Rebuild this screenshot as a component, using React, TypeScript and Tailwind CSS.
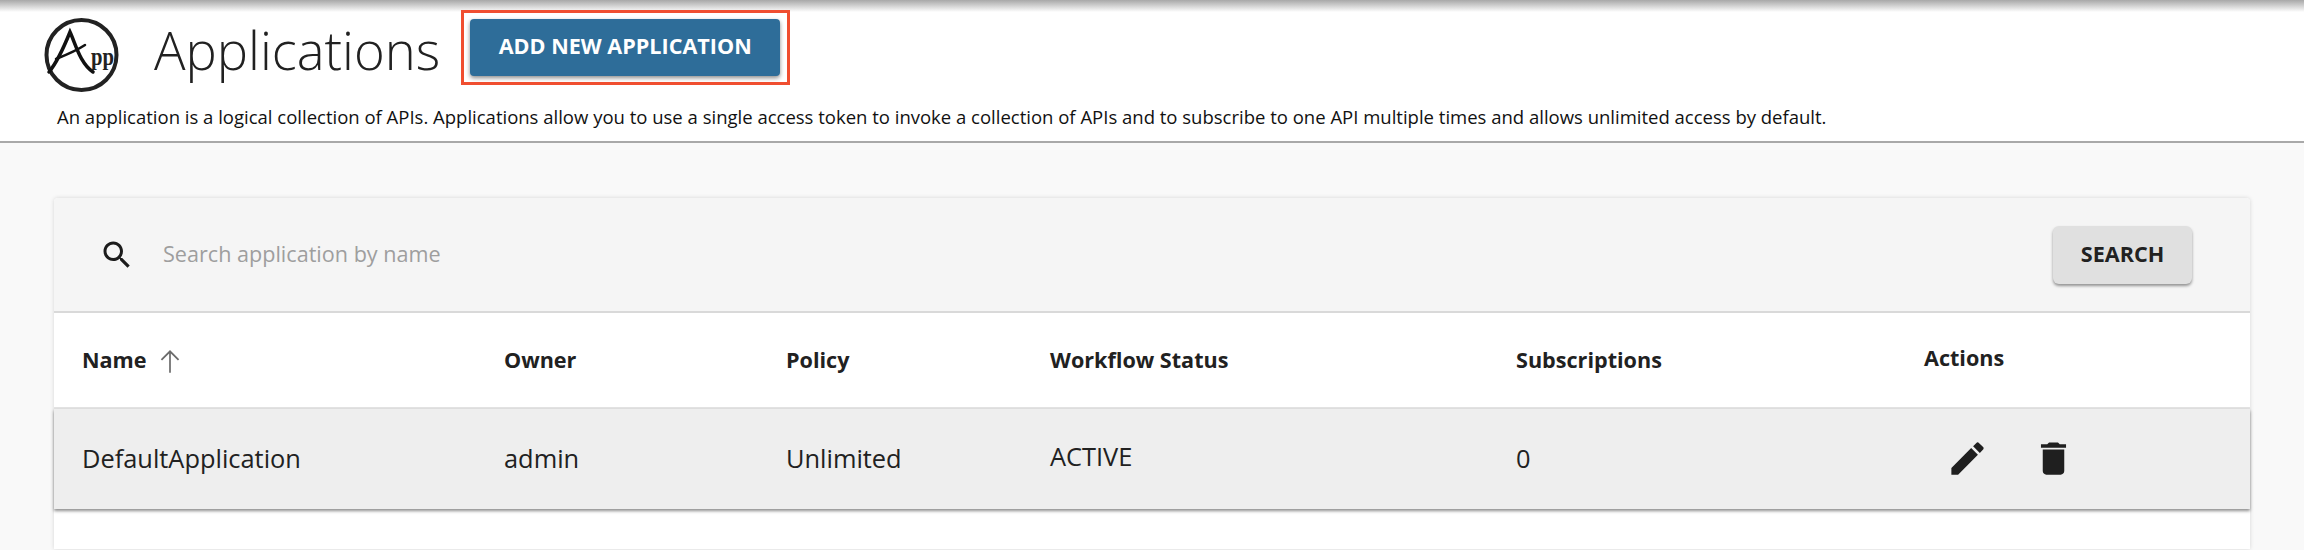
const font = { fontFamily: '"Open Sans", sans-serif' };

const Logo = () => (
  <svg width="76" height="76" viewBox="0 0 76 76" className="shrink-0 mt-[5px] overflow-visible">
    <circle cx="37.5" cy="38" r="35" fill="none" stroke="#222" strokeWidth="4" />
    <path d="M5 55 C14 44 20 30 26 15 C32 28 36 46 49 55" fill="none" stroke="#111" strokeWidth="3.5" strokeLinecap="round" />
    <path d="M12 42 C22 38 32 34 41 28" fill="none" stroke="#111" strokeWidth="2.5" strokeLinecap="round" />
    <text x="47" y="48" fontSize="25" fontWeight="700" fill="#222" textLength="23" lengthAdjust="spacingAndGlyphs" fontFamily="Liberation Serif, serif">pp</text>
  </svg>
);

const columns = "grid grid-cols-[422px_282px_264px_466px_408px_1fr] pl-[28px]";

export default function App() {
  return (
    <div className="min-h-[550px] bg-[#f9f9f9] text-[#212121] overflow-hidden" style={font}>
      <div className="h-[12px] bg-gradient-to-b from-[#a8a8a8] to-white" />
      <header className="h-[131px] bg-white border-b-2 border-[#a9a9a9]">
        <div className="flex items-start pl-[44px]">
          <Logo />
          <h1 className="ml-[34px] mt-[1px] text-[52.5px] leading-[74px] font-light">Applications</h1>
          <div className="ml-[21px] -mt-[2px] border-[3px] border-[#f04e30] p-[6px] w-[329px] h-[75px]">
            <button className="w-[310px] h-[57px] pb-[2px] rounded bg-[#2e6d99] text-white text-[21.6px] font-bold shadow-[0_2px_4px_rgba(0,0,0,0.45)]">
              ADD NEW APPLICATION
            </button>
          </div>
        </div>
        <p className="ml-[57px] mt-[11px] text-[18.5px] leading-[25px] text-[#111]">
          An application is a logical collection of APIs. Applications allow you to use a single access token to invoke a collection of APIs and to subscribe to one API multiple times and allows unlimited access by default.
        </p>
      </header>
      <main className="mx-[54px] mt-[55px] h-[351px] bg-white shadow-[0_0_4px_rgba(0,0,0,0.15)] rounded-t">
        <div className="h-[115px] flex items-center bg-[#f5f5f5] border-b-2 border-[#d9d9d9] pl-[45px] pr-[58px] rounded-t">
          <svg width="36" height="36" viewBox="0 0 24 24" fill="#1c1c1c" className="shrink-0">
            <path d="M15.5 14h-.79l-.28-.27C15.41 12.59 16 11.11 16 9.5 16 5.91 13.09 3 9.5 3S3 5.91 3 9.5 5.91 16 9.5 16c1.61 0 3.09-.59 4.23-1.57l.27.28v.79l5 4.99L20.49 19l-4.99-5zm-6 0C7.01 14 5 11.99 5 9.5S7.01 5 9.5 5 14 7.01 14 9.5 11.99 14 9.5 14z" />
          </svg>
          <span className="ml-[28px] flex-1 text-[21.6px] text-[#9e9e9e]">Search application by name</span>
          <button className="w-[139px] h-[58px] rounded-md bg-[#e0e0e0] text-[21.6px] font-bold text-[#212121] shadow-[0_2px_3px_rgba(0,0,0,0.4)]">
            SEARCH
          </button>
        </div>
        <div className={`${columns} h-[96px] items-center border-b-2 border-[#e3e3e3] text-[21.6px] font-bold`}>
          <div className="flex items-center">
            Name
            <svg width="34" height="34" viewBox="0 0 24 24" fill="#6b6b6b" className="ml-[6px]">
              <path d="M5.5 11.5l.9.9L11.4 7.4V21h1.2V7.4l5 5 .9-.9L12 5z" />
            </svg>
          </div>
          <div>Owner</div>
          <div>Policy</div>
          <div>Workflow Status</div>
          <div>Subscriptions</div>
          <div className="-mt-[3px]">Actions</div>
        </div>
        <div className={`${columns} h-[100px] pb-[2px] items-center bg-[#eeeeee] text-[25.4px] shadow-[0_2px_3px_rgba(0,0,0,0.45)]`}>
          <div>DefaultApplication</div>
          <div>admin</div>
          <div>Unlimited</div>
          <div className="-mt-[4px]">ACTIVE</div>
          <div>0</div>
          <div className="flex items-center pl-[22px]">
            <svg width="43" height="43" viewBox="0 0 24 24" fill="#1f1f1f">
              <path d="M3 17.25V21h3.75L17.81 9.94l-3.75-3.75L3 17.25zM20.71 7.04c.39-.39.39-1.02 0-1.41l-2.34-2.34c-.39-.39-1.02-.39-1.41 0l-1.83 1.83 3.75 3.75 1.83-1.83z" />
            </svg>
            <svg width="43" height="43" viewBox="0 0 24 24" fill="#1f1f1f" className="ml-[43px]">
              <path d="M6 19c0 1.1.9 2 2 2h8c1.1 0 2-.9 2-2V7H6v12zM19 4h-3.5l-1-1h-5l-1 1H5v2h14V4z" />
            </svg>
          </div>
        </div>
      </main>
    </div>
  );
}
